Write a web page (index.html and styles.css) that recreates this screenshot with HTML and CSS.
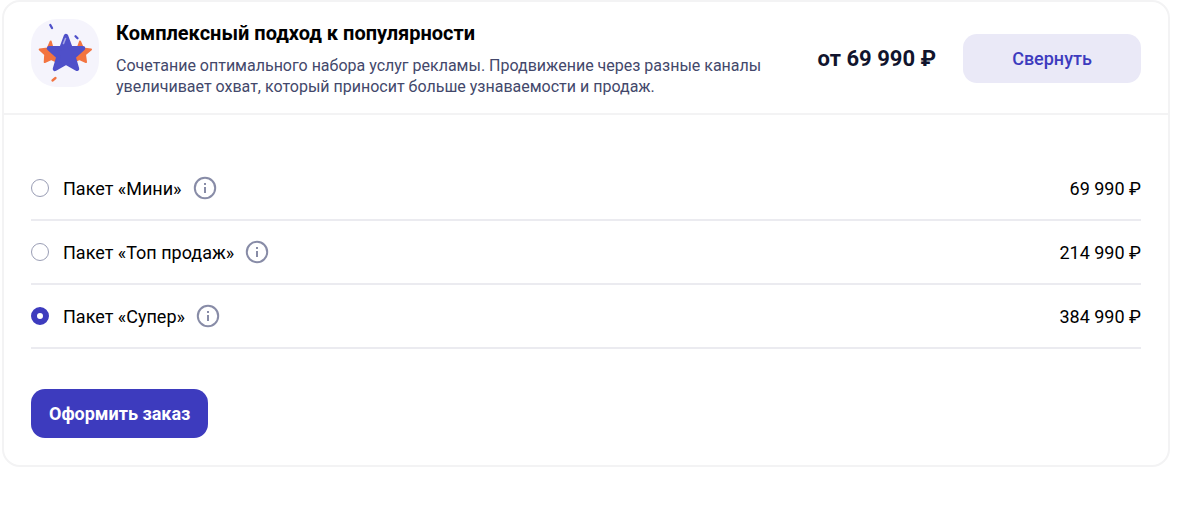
FILE: index.html
```html
<!DOCTYPE html>
<html lang="ru">
<head>
  <meta charset="UTF-8">
  <meta name="viewport" content="width=device-width, initial-scale=1.0">
  <title>Комплексный подход к популярности</title>
  <link rel="stylesheet" href="styles.css">
</head>
<body>
  <section class="card">
    <header class="card-header">
      <div class="card-icon">
        <svg viewBox="0 0 68 68" width="68" height="68" aria-hidden="true">
          <g fill="#f37440" stroke="#f37440" stroke-width="2" stroke-linejoin="round">
            <path d="M19.700 22.500l2 7 8 1-6 5 2 7-5.500-2.500-6.500 3 .5-7.500-5.500-5 8-1z"/>
            <path d="M49 22.500l-2.500 7-8 1 6 5-2 7 6-2.500 6.500 3-1-7.500 6-5-8-1z"/>
          </g>
          <path d="M35 17l4.500 12.300h12.500l-9.500 8.500 3.500 12-11-6.300-11 6.300 3.500-12-9.500-8.500h12.500z" fill="#4f50c9" stroke="#4f50c9" stroke-width="4.500" stroke-linejoin="round"/>
          <g fill="none" stroke-width="2.300" stroke-linecap="round">
            <path d="M34.500 19.500l-2 5" stroke="#a3a4e4" stroke-width="1.600"/>
            <path d="M19.300 6l1.700 3M44.500 17.300l2 2" stroke="#4f50c9"/>
            <path d="M21.500 61.500l3-2.500" stroke="#f37440"/>
          </g>
        </svg>
      </div>
      <div class="card-info">
        <h2 class="card-title">Комплексный подход к популярности</h2>
        <p class="card-text">Сочетание оптимального набора услуг рекламы. Продвижение через разные каналы увеличивает охват, который приносит больше узнаваемости и продаж.</p>
      </div>
      <div class="card-price">от 69 990 ₽</div>
      <button class="btn btn-light" type="button">Свернуть</button>
    </header>
    <form class="card-body">
      <ul class="packages">
        <li class="package">
          <input class="package-radio" type="radio" name="package" id="mini">
          <label class="package-name" for="mini">Пакет «Мини»</label>
          <button class="info" type="button" aria-label="Подробнее">
            <svg viewBox="0 0 24 24" width="24" height="24"><circle cx="12" cy="12" r="10.200" fill="none" stroke="#888ca7" stroke-width="2"/><path d="M12 11v6M12 7v2" stroke="#888ca7" stroke-width="2"/></svg>
          </button>
          <span class="package-price">69 990 ₽</span>
        </li>
        <li class="package">
          <input class="package-radio" type="radio" name="package" id="top">
          <label class="package-name" for="top">Пакет «Топ продаж»</label>
          <button class="info" type="button" aria-label="Подробнее">
            <svg viewBox="0 0 24 24" width="24" height="24"><circle cx="12" cy="12" r="10.200" fill="none" stroke="#888ca7" stroke-width="2"/><path d="M12 11v6M12 7v2" stroke="#888ca7" stroke-width="2"/></svg>
          </button>
          <span class="package-price">214 990 ₽</span>
        </li>
        <li class="package">
          <input class="package-radio" type="radio" name="package" id="super" checked>
          <label class="package-name" for="super">Пакет «Супер»</label>
          <button class="info" type="button" aria-label="Подробнее">
            <svg viewBox="0 0 24 24" width="24" height="24"><circle cx="12" cy="12" r="10.200" fill="none" stroke="#888ca7" stroke-width="2"/><path d="M12 11v6M12 7v2" stroke="#888ca7" stroke-width="2"/></svg>
          </button>
          <span class="package-price">384 990 ₽</span>
        </li>
      </ul>
      <button class="btn btn-primary" type="submit">Оформить заказ</button>
    </form>
  </section>
</body>
</html>
```

FILE: styles.css
```css
* {
  box-sizing: border-box;
}
body {
  margin: 0;
  padding: 0 30px 0 2px;
  background: #fff;
  color: #000;
  font-family: Roboto, Arial, sans-serif;
  font-size: 18px;
}
.card {
  border: 2px solid #f3f3f4;
  border-radius: 18px;
}
.card-header {
  display: flex;
  align-items: center;
  padding: 17px 27px 16px;
  border-bottom: 2px solid #f3f3f4;
}
.card-icon {
  flex: none;
  align-self: flex-start;
  height: 68px;
  margin-right: 17px;
  border-radius: 26px;
  background: #f5f4fc;
}
.card-icon svg {
  display: block;
}
.card-info {
  flex: 1;
}
.card-title {
  margin: 0 0 8px;
  font-size: 20px;
  line-height: 28px;
  font-weight: 700;
}
.card-text {
  max-width: 680px;
  margin: 0;
  color: #43486b;
  font-size: 16px;
  line-height: 21px;
}
.card-price {
  margin: 0 27px;
  color: #11142d;
  font-size: 22px;
  font-weight: 700;
  white-space: nowrap;
}
.btn {
  height: 49px;
  padding: 0 18px;
  border: none;
  border-radius: 14px;
  font-family: inherit;
  font-size: 18px;
  cursor: pointer;
}
.btn-light {
  min-width: 178px;
  background: #eae9f7;
  color: #3d3bbe;
  font-weight: 500;
}
.btn-primary {
  background: #3d3bbe;
  color: #fff;
  font-weight: 700;
}
.card-body {
  padding: 42px 27px 27px;
}
.packages {
  margin: 0 0 40px;
  padding: 0;
  list-style: none;
}
.package {
  display: flex;
  align-items: center;
  height: 64px;
  border-bottom: 2px solid #ebebf0;
}
.package-radio {
  flex: none;
  width: 18px;
  height: 18px;
  margin: 0 14px 0 0;
  border: 1px solid #9a9eb5;
  border-radius: 50%;
  background: #fff;
  appearance: none;
}
.package-radio:checked {
  border: 6px solid #3d3bbe;
}
.info {
  width: 24px;
  height: 24px;
  margin-left: 11px;
  padding: 0;
  border: none;
  background: none;
  cursor: pointer;
}
.info svg {
  display: block;
}
.package-price {
  margin-left: auto;
}
```
